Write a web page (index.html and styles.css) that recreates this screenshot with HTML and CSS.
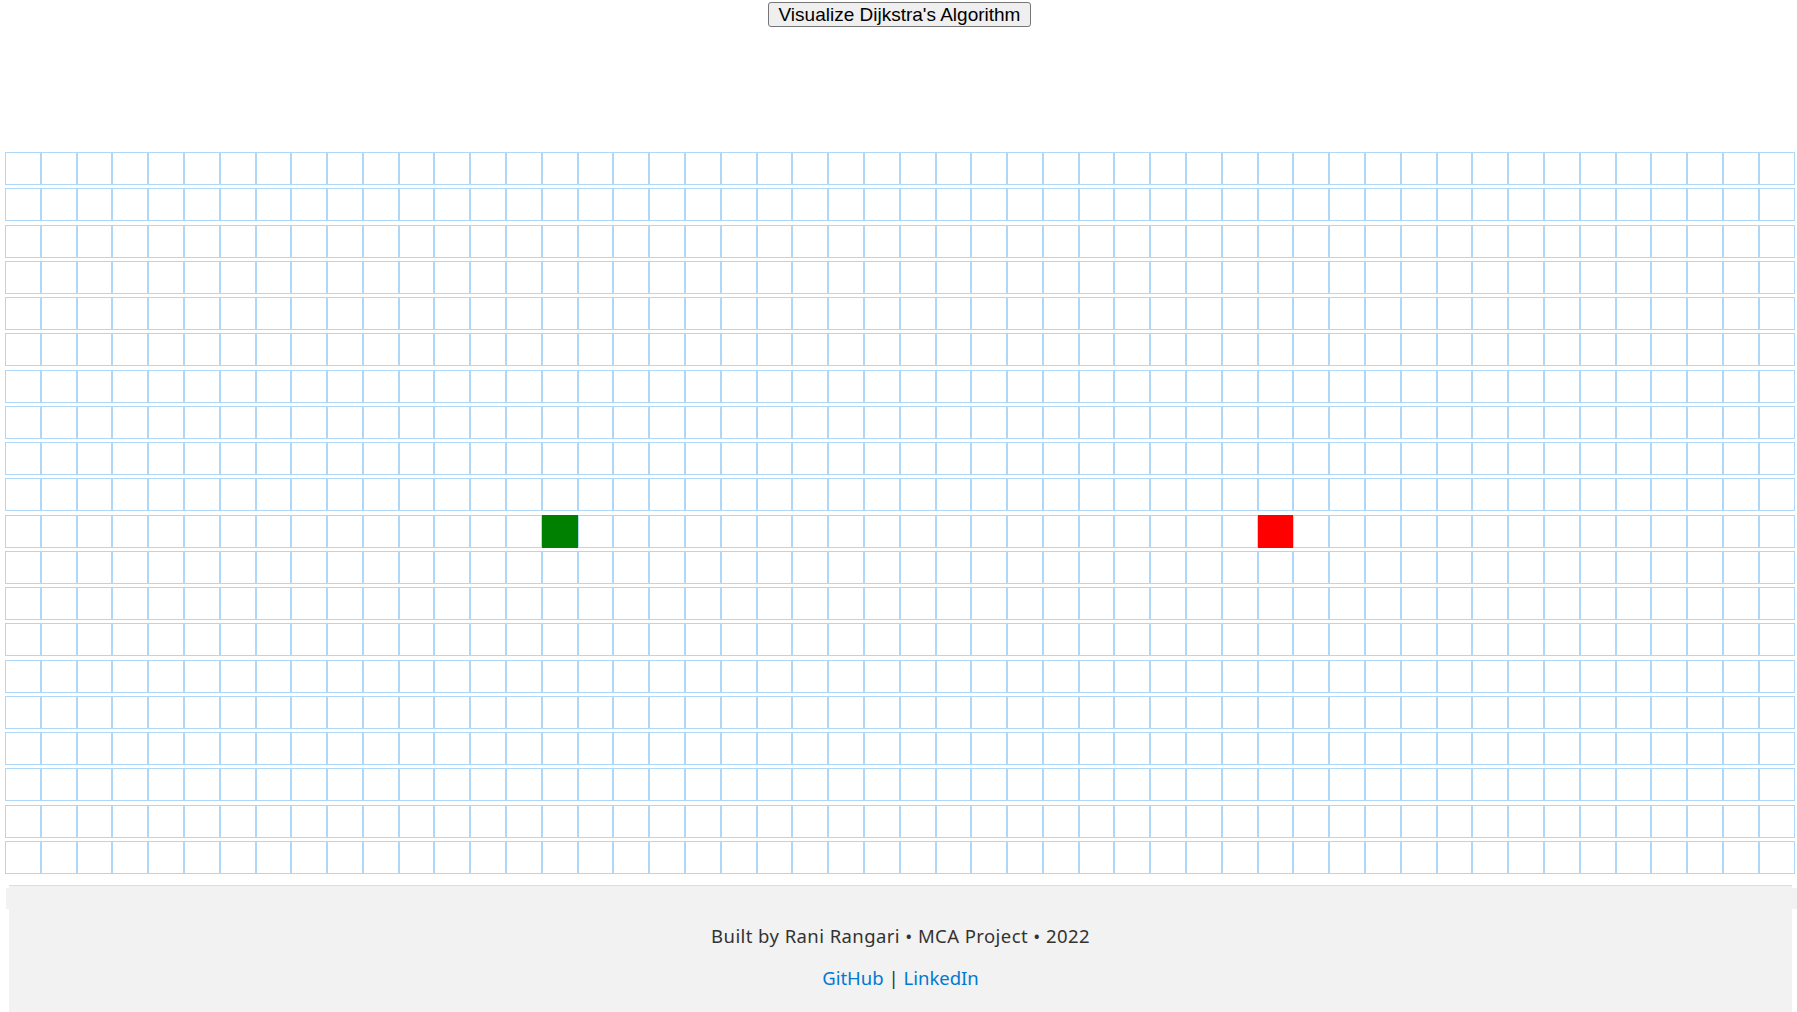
FILE: index.html
```html
<!DOCTYPE html>
<html lang="en">
<head>
<meta charset="utf-8">
<title>Dijkstra's Algorithm Visualizer</title>
<link rel="stylesheet" href="styles.css">
</head>
<body>
<header class="top">
  <button class="visualize" type="button">Visualize Dijkstra's Algorithm</button>
</header>
<main class="grid" id="grid" data-rows="20" data-cols="50" data-start="10,15" data-finish="10,35"></main>
<footer class="footer">
  <div class="footer-strip"></div>
  <p class="credit">Built by Rani Rangari • MCA Project • 2022</p>
  <p class="links"><a href="#">GitHub</a> | <a href="#">LinkedIn</a></p>
</footer>
<script src="grid.js"></script>
</body>
</html>
```
FILE: styles.css
```css
html, body {
  margin: 0;
  padding: 0;
  background: #ffffff;
}
body {
  font-family: "Liberation Sans", Arial, sans-serif;
  overflow: hidden;
}
.top {
  height: 150px;
  padding-top: 2px;
  text-align: center;
}
.visualize {
  font-family: "Liberation Sans", Arial, sans-serif;
  font-size: 19px;
  line-height: 21px;
  padding: 1px 10px;
  color: #000;
  background: #efefef;
  border: 1px solid #767676;
  border-radius: 3px;
  margin: 0;
  margin-left: 2px;
}
.grid {
  display: grid;
  grid-template-columns: repeat(50, 1fr);
  grid-auto-rows: 33px;
  row-gap: 3.26px;
  width: 1789.5px;
  margin-left: 5px;
}
.node {
  box-sizing: border-box;
  border: 1px solid rgb(175, 216, 248);
  background: #fff;
}
.node-start {
  background: #008000;
  border-color: #008000;
}
.node-finish {
  background: #ff0000;
  border-color: #ff0000;
}
.footer {
  margin-top: 11px;
  margin-left: 9px;
  width: 1783px;
  border-top: 1px solid #dddddd;
  background: #f2f2f2;
  padding: 2px 0 60px;
  text-align: center;
  font-family: "Noto Sans", "Open Sans", sans-serif;
  font-size: 18.5px;
  line-height: 24px;
  color: #333333;
}
.footer-strip {
  height: 21px;
  margin: 0 -5px 0 -3px;
  background: #f2f2f2;
}
.credit {
  margin: 15px 0 0;
  letter-spacing: 0.42px;
}
.links {
  margin: 18px 0 0;
}
.links a {
  color: #0078d4;
  text-decoration: none;
}
```
FILE: grid.js
```js
(function () {
  var grid = document.getElementById('grid');
  var rows = +grid.dataset.rows, cols = +grid.dataset.cols;
  var s = grid.dataset.start.split(',').map(Number);
  var f = grid.dataset.finish.split(',').map(Number);
  var frag = document.createDocumentFragment();
  for (var r = 0; r < rows; r++) {
    for (var c = 0; c < cols; c++) {
      var d = document.createElement('div');
      d.className = 'node';
      if (r === s[0] && c === s[1]) d.className += ' node-start';
      if (r === f[0] && c === f[1]) d.className += ' node-finish';
      frag.appendChild(d);
    }
  }
  grid.appendChild(frag);
})();
```
